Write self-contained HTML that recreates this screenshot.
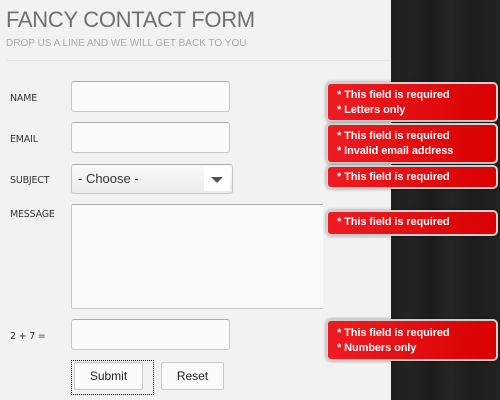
<!DOCTYPE html>
<html><head><style>
*{margin:0;padding:0;box-sizing:border-box}
body{width:500px;height:400px;overflow:hidden;background:#f2f2f2;position:relative;font-family:"DejaVu Sans","Liberation Sans",sans-serif}
.dark{position:absolute;left:391px;top:0;width:109px;height:400px;background:linear-gradient(90deg,#1f1f1f 0,#232323 20px,#1c1c1c 40px,#252525 60px,#1d1d1d 80px,#222 109px);}
.a{position:absolute}
h1{position:absolute;left:6px;top:7px;font:normal 22px "Liberation Sans",sans-serif;color:#707070;letter-spacing:-0.3px}
.sub{left:6px;top:38px;font:10px "Liberation Sans",sans-serif;color:#aaa}
.hr{left:6px;top:60px;width:384px;height:1px;background:#e4e4e4}
.lbl{font-size:9.5px;color:#333;left:10px;letter-spacing:-0.2px}
.in{background:#fafafa;border:1px solid #c8c8c8;border-top-color:#aaa;border-radius:3px}
.err{left:326px;width:172px;border-radius:5px;border:2px solid #d0d0d0;background:linear-gradient(90deg,#ee1c22,#d90000);color:#fff;font:bold 11px "Liberation Sans",sans-serif;padding:4px 0 0 9px;line-height:15px;box-shadow:0 0 3px rgba(0,0,0,.4);letter-spacing:-0.1px}
.btn{background:#fbfbfb;border:1px solid #c8c8c8;border-radius:2px;font:12px "Liberation Sans",sans-serif;color:#222;text-align:center;line-height:26px}
</style></head><body>
<div class="dark"></div>
<h1>FANCY CONTACT FORM</h1>
<div class="a sub">DROP US A LINE AND WE WILL GET BACK TO YOU</div>
<div class="a hr"></div>
<div class="a lbl" style="top:93px">NAME</div>
<div class="a lbl" style="top:134px">EMAIL</div>
<div class="a lbl" style="top:175px">SUBJECT</div>
<div class="a lbl" style="top:209px">MESSAGE</div>
<div class="a lbl" style="top:331px">2 + 7 =</div>
<div class="a in" style="left:71px;top:81px;width:159px;height:31px"></div>
<div class="a in" style="left:71px;top:122px;width:159px;height:31px"></div>
<div class="a in" style="left:71px;top:164px;width:162px;height:30px;background:linear-gradient(#fafafa,#ececec)"><span class="a" style="left:6px;top:6px;font:13px 'Liberation Sans',sans-serif;color:#333">- Choose -</span><div class="a" style="right:2px;top:2px;width:26px;height:24px;background:#fff;border-radius:2px"><div class="a" style="left:7px;top:10px;border-left:6px solid transparent;border-right:6px solid transparent;border-top:6px solid #555"></div></div></div>
<div class="a in" style="left:71px;top:204px;width:252px;height:105px;border-radius:2px 0 0 2px;border-right:none"></div>
<div class="a in" style="left:71px;top:319px;width:159px;height:31px"></div>
<div class="a" style="left:71px;top:360px;width:83px;height:35px;border:1px dotted #000"></div>
<div class="a btn" style="left:74px;top:362px;width:69px;height:28px">Submit</div>
<div class="a btn" style="left:161px;top:362px;width:63px;height:28px">Reset</div>
<div class="a err" style="top:82px;height:40px">* This field is required<br>* Letters only</div>
<div class="a err" style="top:123px;height:41px">* This field is required<br>* Invalid email address</div>
<div class="a err" style="top:165px;height:24px;padding-top:3px">* This field is required</div>
<div class="a err" style="top:210px;height:26px;padding-top:3px">* This field is required</div>
<div class="a err" style="top:319px;height:42px;padding-top:5px">* This field is required<br>* Numbers only</div>
</body></html>
